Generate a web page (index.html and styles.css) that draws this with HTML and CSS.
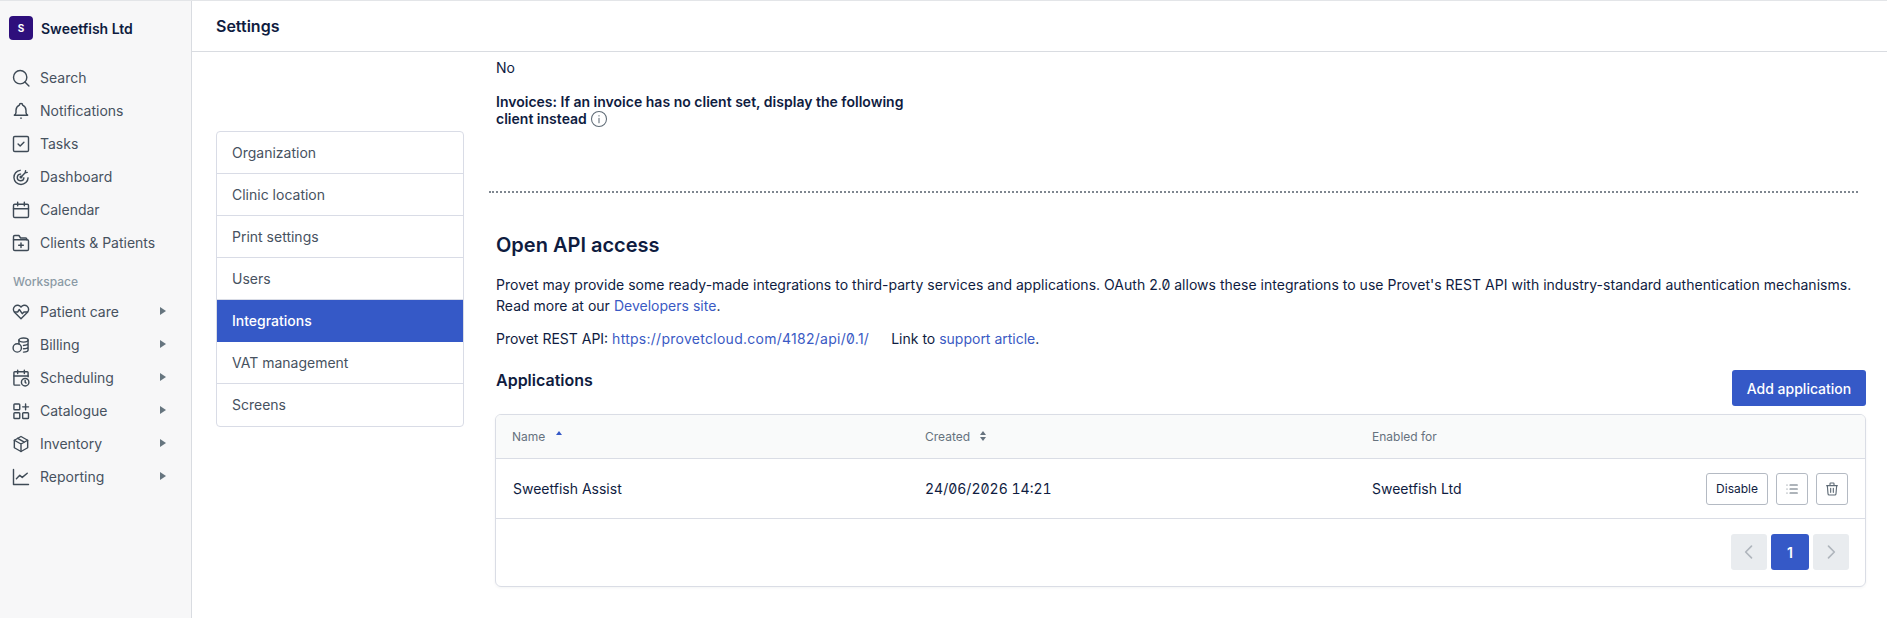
FILE: index.html
```html
<!doctype html>
<html>
<head>
<meta charset="utf-8">
<title>Settings</title>
<link rel="stylesheet" href="styles.css">
</head>
<body>
<svg width="0" height="0" class="defs">
  <symbol id="i-search" viewBox="0 0 24 24"><circle cx="11" cy="11" r="8"/><path d="M21.500 21.500l-4.800-4.800"/></symbol>
  <symbol id="i-bell" viewBox="0 0 24 24"><path d="M10 5a2 2 0 1 1 4 0a7 7 0 0 1 4 6v3a4 4 0 0 0 2 3h-16a4 4 0 0 0 2-3v-3a7 7 0 0 1 4-6"/><path d="M11.500 20.500h1"/></symbol>
  <symbol id="i-tasks" viewBox="0 0 24 24"><rect x="3" y="3" width="18" height="18" rx="1.500"/><path d="M8.500 12l2.500 2.500l4.500-4.500"/></symbol>
  <symbol id="i-dash" viewBox="0 0 24 24"><path d="M11 4a8.500 8.500 0 1 0 9.500 9"/><path d="M11.500 8.500a4 4 0 1 0 4 4.500"/><circle cx="12" cy="12" r="1"/><path d="M13 11l4-4M17 7l.5-2.500M17 7l2.500-.5"/></symbol>
  <symbol id="i-cal" viewBox="0 0 24 24"><rect x="3" y="5" width="18" height="16" rx="1.500"/><path d="M8 2.500v4.500M16 2.500v4.500M3 10.500h18"/></symbol>
  <symbol id="i-folder" viewBox="0 0 24 24"><path d="M3 8v11.500a1.500 1.500 0 0 0 1.500 1.500h15a1.500 1.500 0 0 0 1.500-1.500v-10a1.500 1.500 0 0 0-1.500-1.500z"/><path d="M3 8v-3.500a1.500 1.500 0 0 1 1.500-1.500h5l2 3h6a1.500 1.500 0 0 1 1.500 1.500v.5"/><path d="M12 12v5.500M9.200 14.750h5.600"/></symbol>
  <symbol id="i-heart" viewBox="0 0 24 24"><path d="M19.500 12.600l-7.500 7.400l-7.500-7.400a5 5 0 1 1 7.500-6.500a5 5 0 1 1 7.500 6.500"/><path d="M4 12h4l2-3l3.500 5l2-2h4.500"/></symbol>
  <symbol id="i-coins" viewBox="0 0 24 24"><ellipse cx="15" cy="6" rx="5.500" ry="2.500"/><path d="M9.500 6v4.500M20.500 6v12c0 1.400-2.500 2.500-5.500 2.500M20.500 10c0 1.400-2.500 2.500-5.500 2.500M20.500 14c0 1.400-2.500 2.500-5.500 2.500"/><circle cx="7.500" cy="15.500" r="5"/></symbol>
  <symbol id="i-sched" viewBox="0 0 24 24"><path d="M10.500 20.500h-6a1 1 0 0 1-1-1v-14a1 1 0 0 1 1-1h15a1 1 0 0 1 1 1v5"/><path d="M8 2.500v4M16 2.500v4M3.500 9.500h17"/><circle cx="17" cy="17" r="4.500"/><path d="M17 15v2l1 1"/></symbol>
  <symbol id="i-cat" viewBox="0 0 24 24"><rect x="3.500" y="3.500" width="7" height="7" rx="1"/><rect x="3.500" y="14" width="7" height="7" rx="1"/><rect x="14" y="14" width="7" height="7" rx="1"/><path d="M14 7h7M17.500 3.500v7"/></symbol>
  <symbol id="i-box" viewBox="0 0 24 24"><path d="M12 3l8 4.500v9l-8 4.500l-8-4.500v-9z"/><path d="M4 7.500l8 4.500l8-4.500M12 12v9M8 5.200l8 4.600"/></symbol>
  <symbol id="i-chart" viewBox="0 0 24 24"><path d="M3 3v18h18"/><path d="M6.500 14l4-4l3 2.500l6-5"/></symbol>
  <symbol id="i-info" viewBox="0 0 24 24"><circle cx="12" cy="12" r="10"/><path d="M12 11v6M12 7.500v.5"/></symbol>
  <symbol id="i-list" viewBox="0 0 24 24"><path d="M9 6h11M9 12h11M9 18h11M4.500 6v.01M4.500 12v.01M4.500 18v.01"/></symbol>
  <symbol id="i-trash" viewBox="0 0 24 24"><path d="M4 7h16M10 11v6M14 11v6M5 7l1 12a2 2 0 0 0 2 2h8a2 2 0 0 0 2-2l1-12M9 7v-3a1 1 0 0 1 1-1h4a1 1 0 0 1 1 1v3"/></symbol>
</svg>

<div class="app">
  <aside class="sidebar">
    <div class="org"><span class="org-logo">S</span><span class="org-name">Sweetfish Ltd</span></div>
    <nav class="nav">
      <a class="nav-item"><svg class="ico"><use href="#i-search"/></svg>Search</a>
      <a class="nav-item"><svg class="ico"><use href="#i-bell"/></svg>Notifications</a>
      <a class="nav-item"><svg class="ico"><use href="#i-tasks"/></svg>Tasks</a>
      <a class="nav-item"><svg class="ico"><use href="#i-dash"/></svg>Dashboard</a>
      <a class="nav-item"><svg class="ico"><use href="#i-cal"/></svg>Calendar</a>
      <a class="nav-item"><svg class="ico"><use href="#i-folder"/></svg>Clients &amp; Patients</a>
    </nav>
    <div class="nav-title">Workspace</div>
    <nav class="nav">
      <a class="nav-item"><svg class="ico"><use href="#i-heart"/></svg>Patient care<i class="caret"></i></a>
      <a class="nav-item"><svg class="ico"><use href="#i-coins"/></svg>Billing<i class="caret"></i></a>
      <a class="nav-item"><svg class="ico"><use href="#i-sched"/></svg>Scheduling<i class="caret"></i></a>
      <a class="nav-item"><svg class="ico"><use href="#i-cat"/></svg>Catalogue<i class="caret"></i></a>
      <a class="nav-item"><svg class="ico"><use href="#i-box"/></svg>Inventory<i class="caret"></i></a>
      <a class="nav-item"><svg class="ico"><use href="#i-chart"/></svg>Reporting<i class="caret"></i></a>
    </nav>
  </aside>

  <div class="main">
    <header class="topbar">Settings</header>
    <div class="page">
      <ul class="menu">
        <li>Organization</li>
        <li>Clinic location</li>
        <li>Print settings</li>
        <li>Users</li>
        <li class="active">Integrations</li>
        <li>VAT management</li>
        <li>Screens</li>
      </ul>

      <div class="content">
        <div class="setting">
          <p class="no">No</p>
          <p class="label">Invoices: If an invoice has no client set, display the following client instead <svg class="info"><use href="#i-info"/></svg></p>
        </div>
        <div class="dots"></div>
        <section class="api">
          <h2>Open API access</h2>
          <p class="intro">Provet may provide some ready-made integrations to third-party services and applications. OAuth 2.0 allows these integrations to use Provet's REST API with industry-standard authentication mechanisms. Read more at our <a>Developers site</a>.</p>
          <p class="rest">Provet REST API: <a class="url">https://provetcloud.com/4182/api/0.1/</a><span class="rest-gap">Link to <a>support article</a>.</span></p>
          <div class="apps-head">
            <h3>Applications</h3>
            <button class="btn-primary">Add application</button>
          </div>
          <div class="card">
            <div class="row head">
              <div>Name <svg class="sort" viewBox="0 0 8 12"><path class="up" d="M4 1l3 4h-6z"/></svg></div>
              <div>Created <svg class="sort" viewBox="0 0 8 12"><path d="M4 1l3 4h-6zM4 11l3-4h-6z"/></svg></div>
              <div>Enabled for</div>
            </div>
            <div class="row body">
              <div class="app-name">Sweetfish Assist</div>
              <div class="date">24/06/2026 14:21</div>
              <div>Sweetfish Ltd</div>
              <div class="actions">
                <button class="btn">Disable</button>
                <button class="btn square"><svg class="ico-sm"><use href="#i-list"/></svg></button>
                <button class="btn square"><svg class="ico-sm"><use href="#i-trash"/></svg></button>
              </div>
            </div>
            <div class="pager">
              <span class="pg off"><svg viewBox="0 0 24 24" class="chev"><path d="M15 5l-7 7l7 7"/></svg></span>
              <span class="pg on">1</span>
              <span class="pg off"><svg viewBox="0 0 24 24" class="chev"><path d="M9 5l7 7l-7 7"/></svg></span>
            </div>
          </div>
        </section>
      </div>
    </div>
  </div>
</div>
</body>
</html>
```

FILE: styles.css
```css
*{box-sizing:border-box;}
html,body{margin:0;padding:0;height:100%;overflow:hidden;}
body{font-family:Inter,"Liberation Sans",sans-serif;font-size:14px;color:#0f1c3f;background:#fff;font-feature-settings:"zero";}
p,h2,h3,ul{margin:0;padding:0;}
li{list-style:none;}
a{color:#3a5ac4;}
.defs{position:absolute;}

.app{display:flex;height:618px;border-top:1px solid #e3e5e8;}

.sidebar{width:192px;flex:none;background:#f7f7f8;border-right:1px solid #d9dce1;padding-top:15px;}
.org{display:flex;align-items:center;gap:8px;padding-left:9px;height:24px;margin-bottom:21px;}
.org-logo{width:24px;height:24px;border-radius:4px;background:#2e0f7c;color:#fff;font-size:10px;font-weight:700;display:flex;align-items:center;justify-content:center;}
.org-name{font-weight:600;font-size:14px;color:#0f1c3f;}
.nav-item{display:flex;align-items:center;height:33px;padding-left:10px;color:#47525f;font-size:14px;position:relative;}
.ico{width:20px;height:20px;margin:0 9px 0 1px;fill:none;stroke:#3e4a56;stroke-width:1.700;stroke-linecap:round;stroke-linejoin:round;}
.caret{position:absolute;left:160px;top:12px;border-left:6px solid #66757f;border-top:4.500px solid transparent;border-bottom:4.500px solid transparent;}
.nav-title{font-size:12px;font-weight:500;color:#8b9aa5;padding:15px 0 0 13px;height:36px;line-height:16px;}

.main{flex:1;min-width:0;}
.topbar{height:51px;border-bottom:1px solid #d9dce1;padding-left:24px;line-height:51px;font-size:16px;font-weight:600;color:#0f1c3f;}
.page{display:flex;}

.menu{width:248px;flex:none;margin:79px 0 0 24px;border:1px solid #d9dce6;border-radius:4px;overflow:hidden;align-self:flex-start;}
.menu li{height:42px;line-height:41px;padding-left:15px;color:#47525f;border-bottom:1px solid #d9dce6;}
.menu li:last-child{border-bottom:0;}
.menu li.active{background:#3559c7;color:#fff;font-weight:500;border-bottom-color:#3559c7;}

.content{flex:1;min-width:0;padding:0 21px 0 25px;}
.setting{padding:5px 0 0 7px;height:139px;}
.no{line-height:21px;}
.label{font-weight:600;width:430px;line-height:17px;margin-top:15px;letter-spacing:.01px;}
.info{width:18px;height:18px;vertical-align:-4px;fill:none;stroke:#5f6b76;stroke-width:1.400;stroke-linecap:round;}
.dots{border-top:2px dotted #7f8790;margin-right:8px;}

.api{padding:38px 0 0 7px;}
h2{font-size:20px;font-weight:600;line-height:28px;color:#0f1c3f;}
.intro{margin-top:15px;line-height:21px;letter-spacing:.02px;}
.rest{margin-top:12px;line-height:21px;}
.url{letter-spacing:.27px;}
.rest-gap{margin-left:22px;}
.apps-head{display:flex;justify-content:space-between;align-items:flex-start;margin-top:21px;}
h3{font-size:16px;font-weight:600;line-height:22px;margin-top:-1px;color:#0f1c3f;}
.btn-primary{width:134px;height:36px;border:0;border-radius:3px;background:#3559c7;color:#fff;font:500 14px Inter,"Liberation Sans",sans-serif;}

.card{margin-top:8px;margin-left:-1px;border:1px solid #dadde5;border-radius:6px;overflow:hidden;box-shadow:0 1px 3px rgba(20,30,60,.05);}
.row{display:grid;grid-template-columns:413px 447px 1fr auto;align-items:center;padding-left:16px;}
.row.head{grid-template-columns:413px 447px 1fr;height:44px;background:#f9fafa;border-bottom:1px solid #dadde5;font-size:12px;color:#66727e;}
.sort{width:8px;height:12px;margin-left:6px;fill:#66727e;vertical-align:-1px;}
.sort .up{fill:#3559c7;}
.row.body{height:60px;border-bottom:1px solid #dadde5;}
.app-name{padding-left:1px;}
.date{font-variant-numeric:tabular-nums;}
.actions{display:flex;gap:8px;padding-right:17px;}
.btn{height:32px;padding:0 9px;background:#fff;border:1px solid #b4bac3;border-radius:3px;font:400 12px Inter,"Liberation Sans",sans-serif;color:#0f1c3f;}
.btn.square{width:32px;padding:0;display:flex;align-items:center;justify-content:center;}
.ico-sm{width:16px;height:16px;fill:none;stroke:#5f6b76;stroke-width:1.700;stroke-linecap:round;stroke-linejoin:round;}
.pager{display:flex;justify-content:flex-end;gap:4px;padding:15px 16px 16px 0;}
.pg{width:36px;height:36px;border-radius:3px;display:flex;align-items:center;justify-content:center;}
.pg.on{width:38px;background:#3559c7;color:#fff;font-weight:600;}
.pg.off{background:#e9ecef;}
.chev{width:20px;height:20px;fill:none;stroke:#b0b6bd;stroke-width:2;stroke-linecap:round;stroke-linejoin:round;}
```
